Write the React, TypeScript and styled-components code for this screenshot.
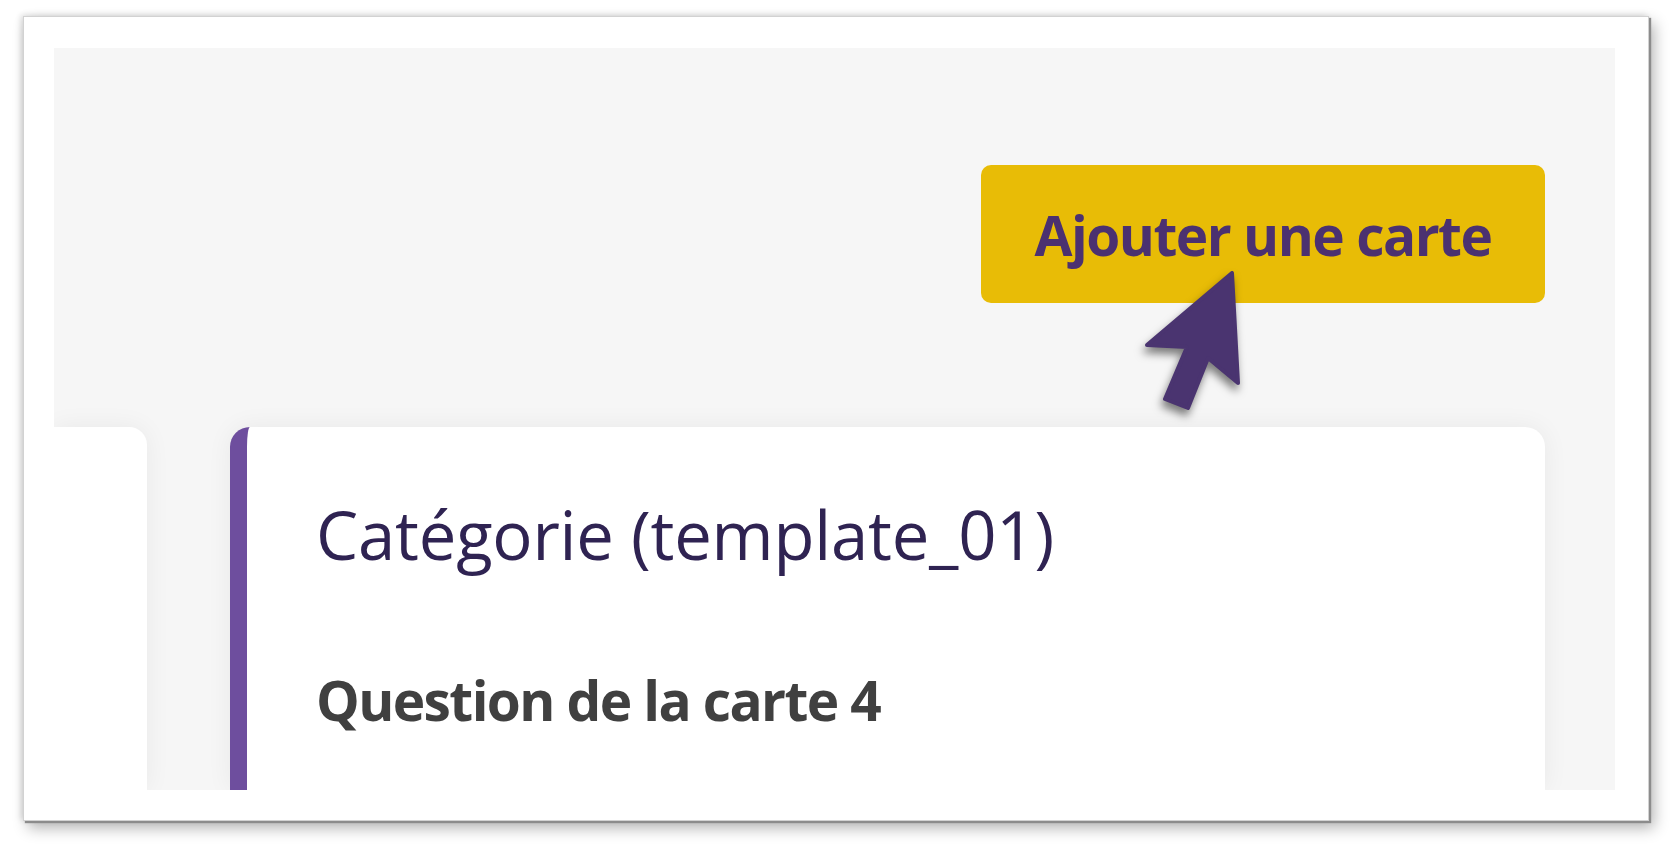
import React from "react";
import styled, { createGlobalStyle } from "styled-components";

const GlobalStyle = createGlobalStyle`
  * {
    padding: 0;
    margin: 0;
    box-sizing: border-box;
    font-family: "Open Sans", "Noto Sans", sans-serif;
  }

  html,
  body {
    width: 100%;
    height: 100%;
    overflow: hidden;
    background-color: #fff;
  }

  button {
    border: none;
    outline: none;
    cursor: pointer;
  }
`;

const Page = styled.div`
  width: 1671px;
  height: 851px;
  padding: 16px 22px 30px 23px;
`;

const Frame = styled.div`
  width: 100%;
  height: 100%;
  padding: 31px 33px 30px 30px;
  background-color: #fff;
  border: 1px solid #d2d2d2;
  box-shadow: 2px 2px 1px #8c8c8c, 5px 7px 14px rgba(0, 0, 0, 0.3),
    -2px -1px 6px rgba(0, 0, 0, 0.14);
`;

const Screen = styled.div`
  position: relative;
  height: 100%;
  display: flex;
  flex-direction: column;
  background-color: #f6f6f6;
  overflow: hidden;
`;

const Toolbar = styled.div`
  display: flex;
  justify-content: flex-end;
  padding: 117px 70px 0 0;
`;

const ButtonWrap = styled.div`
  position: relative;
`;

const AddButton = styled.button`
  display: flex;
  align-items: center;
  justify-content: center;
  width: 564px;
  height: 138px;
  border-radius: 10px;
  background-color: #e8bc06;
  color: #4b3170;
  font-size: 55px;
  font-weight: 700;
  letter-spacing: -1.5px;
  line-height: 1;
`;

const Cursor = styled.svg`
  position: absolute;
  left: 159px;
  top: 103px;
  width: 110px;
  height: 150px;
  overflow: visible;
  filter: drop-shadow(-2px 6px 4px rgba(0, 0, 0, 0.5));
`;

const CardRow = styled.div`
  display: flex;
  gap: 83px;
  margin-top: 124px;
  padding-right: 70px;
  flex: 1;
`;

const Card = styled.div<{ $accent?: boolean; $width?: number }>`
  background-color: #fff;
  ${({ $width }) => ($width ? `width: ${$width}px; flex-shrink: 0;` : "flex: 1;")}
  border-radius: ${({ $accent }) => ($accent ? "20px 20px 0 0" : "0 18px 0 0")};
  border-left: ${({ $accent }) => ($accent ? "17px solid #6e4e9e" : "none")};
  box-shadow: 0 0 26px rgba(0, 0, 0, 0.06);
  padding: ${({ $accent }) => ($accent ? "74px 40px 0 69px" : "0")};
`;

const CardTitle = styled.h2`
  font-size: 67px;
  font-weight: 400;
  line-height: 1;
  letter-spacing: -0.2px;
  color: #2f2352;
`;

const CardQuestion = styled.h3`
  margin-top: 104px;
  font-size: 55px;
  font-weight: 700;
  line-height: 1;
  letter-spacing: -1.6px;
  color: #404040;
`;

function App() {
  return (
    <Page>
      <GlobalStyle />
      <Frame>
        <Screen>
          <Toolbar>
            <ButtonWrap>
              <AddButton>Ajouter une carte</AddButton>
              <Cursor viewBox="0 0 110 150">
                <path
                  d="M92 5 L98 115 L68 90 L48 140 L25 131 L47 79 L7 77 Z"
                  fill="#4a3470"
                  stroke="#4a3470"
                  strokeWidth="4"
                  strokeLinejoin="round"
                />
              </Cursor>
            </ButtonWrap>
          </Toolbar>
          <CardRow>
            <Card $width={93} />
            <Card $accent>
              <CardTitle>Catégorie (template_01)</CardTitle>
              <CardQuestion>Question de la carte 4</CardQuestion>
            </Card>
          </CardRow>
        </Screen>
      </Frame>
    </Page>
  );
}

export default App;
